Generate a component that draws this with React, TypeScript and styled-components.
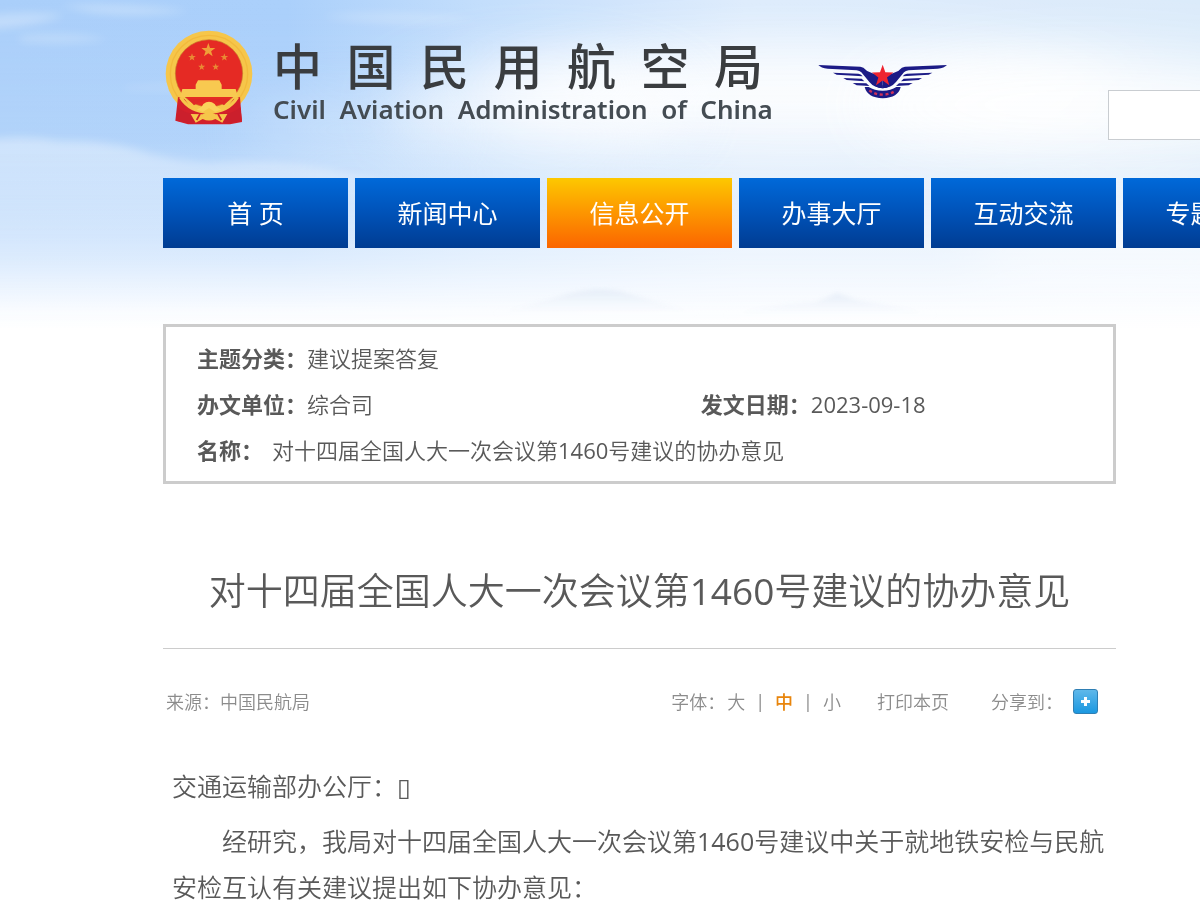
import React, { useState } from "react";
import styled, { createGlobalStyle } from "styled-components";

const GlobalStyle = createGlobalStyle`
  * { box-sizing: border-box; }
  body {
    margin: 0;
    background: #fff;
    color: #595959;
    font-family: "Open Sans", "Noto Sans CJK SC", sans-serif;
    font-weight: 350;
  }
`;

const Page = styled.div`
  position: relative;
  overflow: hidden;
`;

const Sky = styled.svg`
  position: absolute;
  top: 0;
  left: 0;
  width: 100%;
  height: 330px;
  z-index: -1;
`;

const Header = styled.header`
  padding-left: 163px;
`;

const Masthead = styled.div`
  display: flex;
  align-items: flex-start;
  height: 178px;
  padding-top: 30px;
`;

const Brand = styled.a`
  display: flex;
  flex: none;
  color: #3a3d40;
  text-decoration: none;
`;

const Emblem = styled.svg`
  width: 88px;
  height: 95px;
  margin: 0 20px 0 2px;
`;

const BrandText = styled.div`
  width: 506px;
  white-space: nowrap;
`;

const BrandName = styled.div`
  font-size: 49px;
  font-weight: 500;
  line-height: 72px;
  height: 63px;
`;

const BrandEnglish = styled.div`
  color: #444c53;
  font: 600 26px/32px "Noto Sans", sans-serif;
  white-space: pre;
`;

const Wings = styled.svg`
  width: 132px;
  height: 36px;
  margin: 33px 0 0 38px;
`;

const Search = styled.input`
  flex: 1;
  min-width: 0;
  height: 50px;
  margin: 60px 0 0 159px;
  padding: 0 12px;
  border: 1px solid #c9cdd1;
  border-right: 0;
  border-radius: 0;
  background: #fff;
  font: inherit;
  font-size: 18px;
`;

const Nav = styled.nav`
  display: flex;
  gap: 7px;
`;

const NavLink = styled.a<{ $active?: boolean }>`
  flex: none;
  width: 185px;
  height: 70px;
  color: #fff;
  font-size: 25px;
  font-weight: 400;
  line-height: 70px;
  text-align: center;
  text-decoration: none;
  background: ${(p) =>
    p.$active
      ? "linear-gradient(#fdc800, #fd9a00 45%, #fb6500)"
      : "linear-gradient(#0069d9, #0052b8 50%, #003c92)"};
`;

const Main = styled.main`
  margin: 76px 84px 0 163px;
`;

const Info = styled.dl`
  display: grid;
  grid-template-columns: 11fr 9fr;
  margin: 0;
  padding: 8px 0 8px 31px;
  border: 3px solid #ccc;
  background: #fff;
  font-size: 22px;
  line-height: 46px;
`;

const InfoItem = styled.div<{ $wide?: boolean; $spaced?: boolean }>`
  display: flex;
  grid-column: ${(p) => (p.$wide ? "1 / -1" : "auto")};
  gap: ${(p) => (p.$spaced ? "9px" : "0")};
  dt { font-weight: 700; }
  dd { margin: 0; }
`;

const Latin = styled.span`
  font-weight: 400;
`;

const Title = styled.h1`
  margin: 76px 0 0;
  padding-bottom: 26px;
  border-bottom: 1px solid #ccc;
  font-size: 37px;
  font-weight: 350;
  line-height: 62px;
  text-align: center;
  white-space: nowrap;
`;

const Meta = styled.div`
  display: flex;
  justify-content: space-between;
  align-items: center;
  height: 104px;
  padding: 0 18px 0 3px;
  color: #8c8c8c;
  font-size: 18px;
`;

const Tools = styled.div`
  display: flex;
  align-items: center;
`;

const Sizes = styled.div`
  display: flex;
  align-items: center;
  gap: 10px;
  margin-right: 36px;
`;

const SizeLabel = styled.span`
  margin-right: -8px;
`;

const TextButton = styled.button<{ $active?: boolean }>`
  padding: 0;
  border: 0;
  background: none;
  color: ${(p) => (p.$active ? "#e8850c" : "inherit")};
  font: inherit;
  font-weight: ${(p) => (p.$active ? 500 : 350)};
  cursor: pointer;
`;

const ShareLabel = styled.span`
  margin: 0 10px 0 42px;
`;

const ShareButton = styled.button`
  display: flex;
  align-items: center;
  justify-content: center;
  width: 25px;
  height: 25px;
  padding: 0;
  border: 1px solid #2f7fb4;
  border-radius: 3px;
  background: linear-gradient(#5fb8ea, #1c98e0);
`;

const Article = styled.article`
  padding: 10px 9px 6px;
  font-size: 25px;
  line-height: 46px;
`;

const Paragraph = styled.p<{ $indent?: boolean }>`
  margin: 0 0 9px;
  text-indent: ${(p) => (p.$indent ? "2em" : "0")};
  &:last-child { margin-bottom: 0; }
`;

const star = (cx: number, cy: number, r: number) =>
  Array.from({ length: 10 }, (_, i) => {
    const a = -Math.PI / 2 + (i * Math.PI) / 5;
    const d = i % 2 ? r * 0.4 : r;
    return `${cx + d * Math.cos(a)},${cy + d * Math.sin(a)}`;
  }).join(" ");

const NAV = ["首 页", "新闻中心", "信息公开", "办事大厅", "互动交流", "专题专栏"];

function SkyBackdrop() {
  return (
    <Sky viewBox="0 0 1200 330" preserveAspectRatio="none" aria-hidden="true">
      <defs>
        <linearGradient id="base" x1="0" x2="1" y1="0" y2="0">
          <stop offset="0" stopColor="#aacffa" />
          <stop offset=".24" stopColor="#abd0fb" />
          <stop offset=".4" stopColor="#c3defc" />
          <stop offset=".62" stopColor="#dcebfc" />
          <stop offset="1" stopColor="#dbebfa" />
        </linearGradient>
        <linearGradient id="fade" x1="0" x2="0" y1="0" y2="1">
          <stop offset="0" stopColor="#fafcff" stopOpacity="0" />
          <stop offset=".42" stopColor="#fafcff" stopOpacity=".1" />
          <stop offset=".6" stopColor="#fafcff" stopOpacity=".35" />
          <stop offset=".78" stopColor="#fafcff" stopOpacity=".62" />
          <stop offset=".94" stopColor="#fcfdff" stopOpacity=".96" />
          <stop offset="1" stopColor="#fff" />
        </linearGradient>
        <linearGradient id="hill" x1="0" x2="0" y1="0" y2="1">
          <stop offset="0" stopColor="#dfe8f5" stopOpacity=".7" />
          <stop offset="1" stopColor="#eef3fb" stopOpacity="0" />
        </linearGradient>
        <linearGradient id="bank" x1="0" x2="0" y1="0" y2="1">
          <stop offset="0" stopColor="#fff" stopOpacity=".4" />
          <stop offset="1" stopColor="#fff" stopOpacity="0" />
        </linearGradient>
        <filter id="soft" x="-40%" y="-80%" width="180%" height="260%">
          <feGaussianBlur stdDeviation="28" />
        </filter>
        <filter id="cloud" x="-20%" y="-60%" width="140%" height="220%">
          <feGaussianBlur stdDeviation="4" />
        </filter>
        <filter id="haze" x="-20%" y="-20%" width="140%" height="140%">
          <feGaussianBlur stdDeviation="2" />
        </filter>
      </defs>
      <rect width="1200" height="330" fill="url(#base)" />
      <ellipse cx="800" cy="95" rx="320" ry="52" fill="#fff" opacity=".9" filter="url(#soft)" />
      <ellipse cx="1080" cy="105" rx="220" ry="52" fill="#fff" opacity=".9" filter="url(#soft)" />
      <ellipse cx="540" cy="110" rx="150" ry="48" fill="#fff" opacity=".65" filter="url(#soft)" />
      <ellipse cx="350" cy="130" rx="110" ry="35" fill="#fff" opacity=".25" filter="url(#soft)" />
      <ellipse cx="1130" cy="260" rx="160" ry="60" fill="#fff" opacity=".5" filter="url(#soft)" />
      <g filter="url(#cloud)">
        <path
          d="M-20 141 Q20 134 60 141 Q100 140 135 149 Q165 160 210 163 Q290 158 340 172 L480 200 L480 240 L-20 240Z"
          fill="url(#bank)"
        />
        <path d="M-20 16 Q30 10 65 15 Q30 28 -20 30Z M60 6 Q120 2 190 11 Q130 18 90 12Z" fill="#fff" opacity=".28" />
        <path d="M20 36 Q60 30 108 39 Q70 46 20 42Z M320 16 Q400 8 480 20 Q400 28 320 16Z" fill="#fff" opacity=".2" />
        <path d="M125 86 Q190 78 260 84 Q200 94 125 90Z" fill="#fff" opacity=".12" />
      </g>
      <rect width="1200" height="330" fill="url(#fade)" />
      <g fill="url(#hill)" filter="url(#haze)">
        <path d="M490 314 Q530 305 560 296 Q590 286 620 291 Q655 301 700 314Z" />
        <path d="M720 316 Q780 303 815 302 L837 293 L858 300 Q900 306 940 316Z" />
      </g>
    </Sky>
  );
}

function NationalEmblem() {
  return (
    <Emblem viewBox="45 30 264 285" aria-hidden="true">
      <circle cx="177" cy="162" r="130" fill="#f6c64a" />
      <circle cx="177" cy="162" r="116" fill="none" stroke="#f2ba3c" strokeWidth="4" />
      <path d="M84 231 L104 238 Q130 282 177 276 Q224 282 250 238 L270 231 L276 306 L240 313 L114 313 L76 302Z" fill="#d3202b" />
      <circle cx="177" cy="160" r="101" fill="#e52a24" stroke="#c87a2c" strokeWidth="2" />
      <path d="M92 232 Q120 276 177 276 Q234 276 262 232" fill="none" stroke="#f6c64a" strokeWidth="10" />
      <polygon points={star(175, 91, 22)} fill="#f0a038" />
      <polygon points={star(126, 112, 12)} fill="#e98a34" />
      <polygon points={star(223, 112, 12)} fill="#e98a34" />
      <polygon points={star(155, 141, 11)} fill="#e98a34" />
      <polygon points={star(197, 141, 11)} fill="#e98a34" />
      <path d="M144 181 H208 L215 194 V207 H257 L264 231 H90 L97 207 H137 V194Z" fill="#f8c950" />
      <path d="M114 237 H240 L222 256 Q205 242 177 240 Q149 242 132 256Z" fill="#df2826" />
      <path d="M140 268 Q155 264 160 252 Q177 238 194 252 Q200 264 214 268 L196 276 L177 264 L158 276Z" fill="#fad25c" />
      <path d="M83 262 Q110 286 150 281 L128 311 L78 302Z M271 262 Q244 286 204 281 L226 311 L276 302Z" fill="#cb1f2c" />
      <path d="M122 282 L158 283 Q177 270 196 283 L232 282 L217 308 L196 297 Q177 306 158 297 L137 308Z" fill="#f6c64a" />
      <path d="M150 282 L140 300 M204 282 L214 300" stroke="#d3202b" strokeWidth="5" />
    </Emblem>
  );
}

function WingsBadge() {
  const wing = (
    <>
      <path d="M54 60 L180 65 Q190 66 197 75 L224 111 Q234 121 247 121 V130 Q222 129 207 111 L183 82 Q178 77 169 76 L82 71 Q62 69 54 60Z" />
      <path d="M98 83 L174 86 Q182 86 187 94 L109 89Z" />
      <path d="M129 99 L184 101 L192 109 L139 105Z" />
      <path d="M157 114 L198 115 L207 123 L169 121Z" />
      <path d="M195 76 L222 87 L247 92 V130 Q225 128 213 111Z" />
    </>
  );
  return (
    <Wings viewBox="50 54 396 108" aria-hidden="true">
      <g fill="#1c1b86">{wing}</g>
      <g fill="#1c1b86" transform="translate(494 0) scale(-1 1)">{wing}</g>
      <path d="M193 126 H205 Q222 137 247 137 Q272 137 288 126 H301 Q294 158 247 160 Q201 158 193 126Z" fill="#1c1b86" />
      <path d="M207 136 Q224 149 247 149 Q270 149 287 136" fill="none" stroke="#cf3158" strokeWidth="7" strokeDasharray="9 8" />
      <polygon points={star(247, 93, 34)} fill="#ee2430" />
    </Wings>
  );
}

export default function App() {
  const [size, setSize] = useState("中");
  const subject = (
    <>
      对十四届全国人大一次会议第<Latin>1460</Latin>号建议的协办意见
    </>
  );
  return (
    <Page>
      <GlobalStyle />
      <SkyBackdrop />
      <Header>
        <Masthead>
          <Brand href="#">
            <NationalEmblem />
            <BrandText>
              <BrandName>{"中国民用航空局".split("").join("\u2002")}</BrandName>
              <BrandEnglish>{"Civil  Aviation  Administration  of  China"}</BrandEnglish>
            </BrandText>
          </Brand>
          <WingsBadge />
          <Search type="search" aria-label="搜索" />
        </Masthead>
        <Nav>
          {NAV.map((label) => (
            <NavLink key={label} href="#" $active={label === "信息公开"}>
              {label}
            </NavLink>
          ))}
        </Nav>
      </Header>
      <Main>
        <Info>
          <InfoItem $wide>
            <dt>主题分类：</dt>
            <dd>建议提案答复</dd>
          </InfoItem>
          <InfoItem>
            <dt>办文单位：</dt>
            <dd>综合司</dd>
          </InfoItem>
          <InfoItem>
            <dt>发文日期：</dt>
            <dd>
              <Latin>2023-09-18</Latin>
            </dd>
          </InfoItem>
          <InfoItem $wide $spaced>
            <dt>名称：</dt>
            <dd>{subject}</dd>
          </InfoItem>
        </Info>
        <Title>{subject}</Title>
        <Meta>
          <span>来源：中国民航局</span>
          <Tools>
            <Sizes>
              <SizeLabel>字体：</SizeLabel>
              {["大", "中", "小"].map((s, i) => (
                <React.Fragment key={s}>
                  {i > 0 && <Latin>|</Latin>}
                  <TextButton $active={s === size} onClick={() => setSize(s)}>
                    {s}
                  </TextButton>
                </React.Fragment>
              ))}
            </Sizes>
            <TextButton onClick={() => window.print()}>打印本页</TextButton>
            <ShareLabel>分享到：</ShareLabel>
            <ShareButton aria-label="分享">
              <svg width="11" height="11" viewBox="0 0 11 11" aria-hidden="true">
                <path d="M5.5 1v9M1 5.5h9" stroke="#fff" strokeWidth="3" />
              </svg>
            </ShareButton>
          </Tools>
        </Meta>
        <Article>
          <Paragraph>交通运输部办公厅：▯</Paragraph>
          <Paragraph $indent>
            经研究，我局对十四届全国人大一次会议第<Latin>1460</Latin>
            号建议中关于就地铁安检与民航安检互认有关建议提出如下协办意见：
          </Paragraph>
        </Article>
      </Main>
    </Page>
  );
}
